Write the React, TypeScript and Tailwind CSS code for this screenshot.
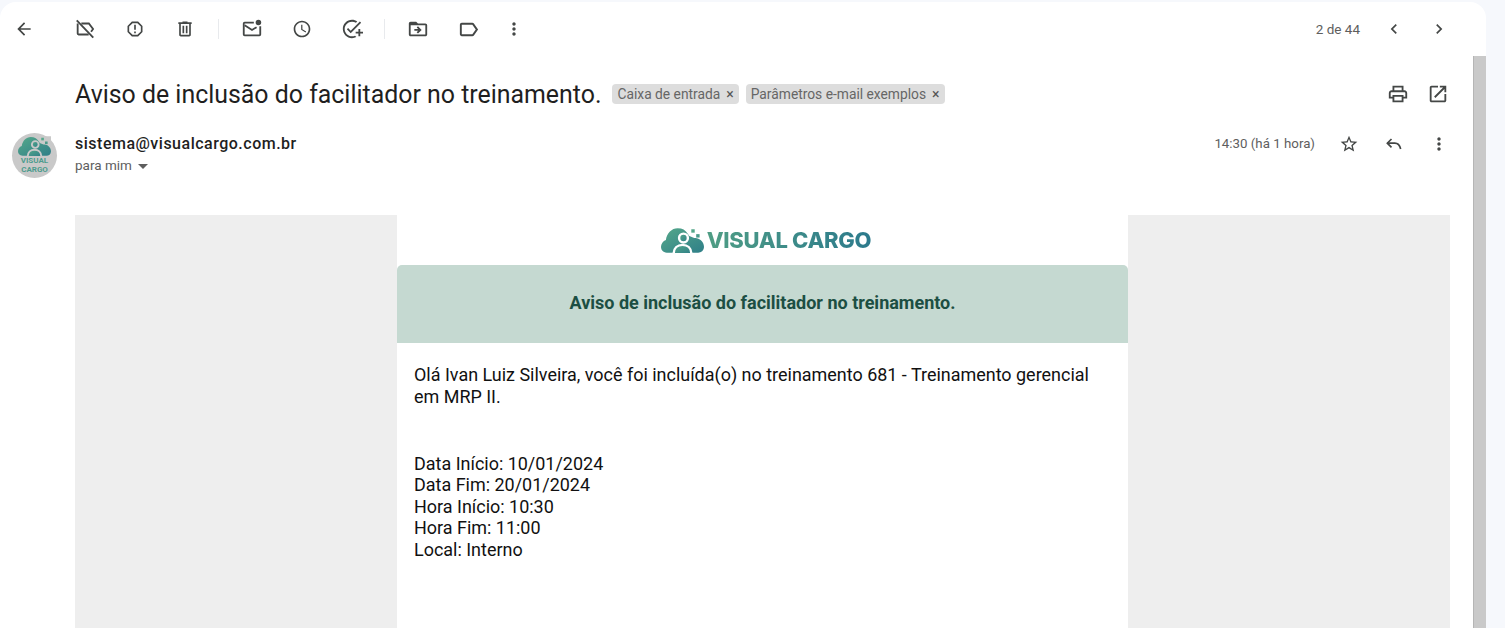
import React from 'react';

const paths = {
  back: 'M20 11H7.83l5.59-5.59L12 4l-8 8 8 8 1.41-1.41L7.83 13H20v-2z',
  report: 'M15.73 3H8.27L3 8.27v7.46L8.27 21h7.46L21 15.73V8.27L15.73 3zM19 14.9L14.9 19H9.1L5 14.9V9.1L9.1 5h5.8L19 9.1v5.8zM11 7h2v6h-2zM11 15h2v2h-2z',
  trash: 'M15 4V3H9v1H4v2h1v13c0 1.1.9 2 2 2h10c1.1 0 2-.9 2-2V6h1V4h-5zm2 15H7V6h10v13zM9 8h2v9H9zm4 0h2v9h-2z',
  clock: 'M11.99 2C6.47 2 2 6.48 2 12s4.47 10 9.99 10C17.52 22 22 17.52 22 12S17.52 2 11.99 2zM12 20c-4.42 0-8-3.58-8-8s3.58-8 8-8 8 3.58 8 8-3.58 8-8 8zm.5-13H11v6l5.25 3.15.75-1.23-4.5-2.67z',
  task: 'M22 5.18L10.59 16.6l-4.24-4.24 1.41-1.41 2.83 2.83 10-10L22 5.18zM12 20c-4.41 0-8-3.59-8-8s3.59-8 8-8c1.57 0 3.04.46 4.28 1.25l1.45-1.45C16.1 2.67 14.13 2 12 2 6.48 2 2 6.48 2 12s4.48 10 10 10c1.73 0 3.36-.44 4.78-1.22l-1.5-1.5c-1 .46-2.11.72-3.28.72zm7-5h-3v2h3v3h2v-3h3v-2h-3v-3h-2v3z',
  move: 'M20 6h-8l-2-2H4c-1.1 0-2 .9-2 2v12c0 1.1.9 2 2 2h16c1.1 0 2-.9 2-2V8c0-1.1-.9-2-2-2zm0 12H4V8h16v10zm-8.01-9l-1.41 1.41L12.16 12H8v2h4.16l-1.59 1.59L11.99 17 16 13.01 11.99 9z',
  label: 'M17.63 5.84C17.27 5.33 16.67 5 16 5L5 5.01C3.9 5.01 3 5.9 3 7v10c0 1.1.9 1.99 2 1.99L16 19c.67 0 1.27-.33 1.63-.84L22 12l-4.37-6.16zM16 17H5V7h11l3.55 5L16 17z',
  more: 'M12 8c1.1 0 2-.9 2-2s-.9-2-2-2-2 .9-2 2 .9 2 2 2zm0 2c-1.1 0-2 .9-2 2s.9 2 2 2 2-.9 2-2-.9-2-2-2zm0 6c-1.1 0-2 .9-2 2s.9 2 2 2 2-.9 2-2-.9-2-2-2z',
  prev: 'M15.41 7.41L14 6l-6 6 6 6 1.41-1.41L10.83 12z',
  next: 'M10 6L8.59 7.41 13.17 12l-4.58 4.59L10 18l6-6z',
  print: 'M19 8h-1V3H6v5H5c-1.66 0-3 1.34-3 3v6h4v4h12v-4h4v-6c0-1.66-1.34-3-3-3zM8 5h8v3H8V5zm8 14H8v-4h8v4zm4-4h-2v-2H6v2H4v-4c0-.55.45-1 1-1h14c.55 0 1 .45 1 1v4z',
  open: 'M19 19H5V5h7V3H5c-1.11 0-2 .9-2 2v14c0 1.1.89 2 2 2h14c1.1 0 2-.9 2-2v-7h-2v7zM14 3v2h3.59l-9.83 9.83 1.41 1.41L19 6.41V10h2V3h-7z',
  star: 'M22 9.24l-7.19-.62L12 2 9.19 8.63 2 9.24l5.46 4.73L5.82 21 12 17.27 18.18 21l-1.63-7.03L22 9.24zM12 15.4l-3.76 2.27 1-4.28-3.32-2.88 4.38-.38L12 6.1l1.71 4.04 4.38.38-3.32 2.88 1 4.28L12 15.4z',
};

const Icon: React.FC<{ d: string; size?: string }> = ({ d, size = 'w-5 h-5' }) => (
  <svg viewBox="0 0 24 24" className={`${size} fill-[#444746]`}>
    <path d={d} />
  </svg>
);

// 목록에 없는 아이콘은 선으로 직접 그림
const IconLabelOff = () => (
  <svg viewBox="0 0 24 24" className="w-[22px] h-[22px] fill-none stroke-[#444746] stroke-2">
    <path d="M3 2.5l18 19" />
    <path d="M8 6h8.2l4.6 6-2.2 3M16 18H5a1 1 0 0 1-1-1V6" />
  </svg>
);

const IconUnread = () => (
  <svg viewBox="0 0 24 24" className="w-[22px] h-[22px]">
    <path d="M14 5H4a1 1 0 0 0-1 1v12a1 1 0 0 0 1 1h16a1 1 0 0 0 1-1V9" fill="none" stroke="#444746" strokeWidth="2" />
    <path d="M4 8l8 5 5-3" fill="none" stroke="#444746" strokeWidth="2" />
    <circle cx="19" cy="5" r="3" fill="#444746" />
  </svg>
);

const IconReply = () => (
  <svg viewBox="0 0 24 24" className="w-5 h-5 fill-none stroke-[#444746] stroke-2">
    <path d="M9 6l-5 5 5 5" />
    <path d="M4 11h9c4 0 6 3 7 7" />
  </svg>
);

const Cloud: React.FC<{ id: string; cut: string; className: string }> = ({ id, cut, className }) => (
  <svg viewBox="0 0 44 26" className={className}>
    <defs>
      <linearGradient id={id} x1="0" y1="0" x2="1" y2="1">
        <stop offset="0" stopColor="#55a88a" />
        <stop offset="1" stopColor="#2f7f88" />
      </linearGradient>
    </defs>
    <path
      d="M6 26C2 26 0 23 0 20c0-3 2-6 5-7 1-7 6-12 12-12 5 0 8 2 10 5l2 3 5 2c4-1 10 3 10 9 0 4-3 6-6 6z"
      fill={`url(#${id})`}
    />
    <circle cx="23" cy="11" r="4.5" fill={`url(#${id})`} stroke={cut} strokeWidth="2.5" />
    <path d="M13 27c0-6 4-9 9-9s9 3 9 9" fill={`url(#${id})`} stroke={cut} strokeWidth="2.5" />
    <path d="M30 0h14v11h-6l-3-4h-5z" fill={cut} />
    <rect x="31" y="2" width="3.5" height="3.5" fill="#55a88a" />
    <rect x="36" y="7" width="3.5" height="3.5" fill="#4a9a8a" />
  </svg>
);

const Chip: React.FC<{ text: string }> = ({ text }) => (
  <div className="h-5 flex items-center gap-[6px] rounded-[4px] bg-[#dddddd] px-[5px] text-[13.8px] text-[#666666]">
    <span>{text}</span>
    <span className="text-[14px] leading-none text-[#555555]">×</span>
  </div>
);

const Divider: React.FC<{ className?: string }> = ({ className = 'mx-[8px]' }) => (
  <div className={`w-px h-5 bg-[#e8eaed] ${className}`} />
);

const Tool: React.FC<{ children: React.ReactNode; className?: string }> = ({ children, className = 'w-[50px]' }) => (
  <div className={`flex justify-center items-center ${className}`}>{children}</div>
);

const App: React.FC = () => {
  return (
    <div className="h-screen overflow-hidden bg-[#f6f8fc] pt-[2px] pr-[19px] font-['Roboto',sans-serif]">
      <div className="h-full bg-white rounded-t-2xl flex overflow-hidden">
        <div className="flex-1 min-w-0 pr-[23px]">
          {/* 상단 툴바 */}
          <div className="h-[54px] flex items-center">
            <Tool className="w-[47px] shrink-0"><Icon d={paths.back} /></Tool>
            <Tool className="w-[13px]"><span /></Tool>
            <Tool><IconLabelOff /></Tool>
            <Tool><Icon d={paths.report} /></Tool>
            <Tool><Icon d={paths.trash} /></Tool>
            <Divider />
            <Tool><IconUnread /></Tool>
            <Tool><Icon d={paths.clock} /></Tool>
            <Tool><Icon d={paths.task} size="w-[22px] h-[22px]" /></Tool>
            <Divider className="ml-[7px] mr-[8px]" />
            <Tool><Icon d={paths.move} size="w-[22px] h-[22px]" /></Tool>
            <Tool><Icon d={paths.label} size="w-[23px] h-[23px]" /></Tool>
            <Tool className="w-[42px]"><Icon d={paths.more} /></Tool>
            <div className="ml-auto flex items-center">
              <span className="text-[13.5px] text-[#5e5e5e] mr-[24px]">2 de 44</span>
              <Tool className="w-5 mr-[25px]"><Icon d={paths.prev} /></Tool>
              <Tool className="w-5"><Icon d={paths.next} /></Tool>
              <div className="w-[1px]" />
            </div>
          </div>

          {/* 제목 */}
          <div className="h-[74px] pl-[75px] flex items-start pt-[22px]">
            <h1 className="text-[24.9px] leading-[34px] font-normal text-[#1f1f1f] mr-[11px]">
              Aviso de inclusão do facilitador no treinamento.
            </h1>
            <div className="flex gap-[7px] mt-[6px]">
              <Chip text="Caixa de entrada" />
              <Chip text="Parâmetros e-mail exemplos" />
            </div>
            <div className="ml-auto flex gap-[18px] mt-[5px] mr-px">
              <Icon d={paths.print} size="w-[22px] h-[22px]" />
              <Icon d={paths.open} size="w-[22px] h-[22px]" />
            </div>
          </div>

          {/* 발신자 */}
          <div className="h-[85px] flex pl-[12px]">
            <div className="w-[45px] h-[45px] mt-[3px] rounded-full bg-[#c9c9c9] flex flex-col items-center pt-[3px] shrink-0">
              <Cloud id="cloud-avatar" cut="#c9c9c9" className="w-[33px] h-[20px]" />
              <div className="text-[8px] leading-[9px] font-bold text-center text-[#4d9c8e]">
                VISUAL
                <br />
                CARGO
              </div>
            </div>
            <div className="ml-[18px] pt-[4px]">
              <div className="text-[16px] leading-[20px] font-medium tracking-[0.5px] text-[#1f1f1f]">
                sistema@visualcargo.com.br
              </div>
              <div className="flex items-center text-[13.5px] leading-[20px] mt-[1px] text-[#5e5e5e]">
                para mim
                <span className="ml-[6px] mt-[2px] w-0 h-0 border-x-[5px] border-x-transparent border-t-[5px] border-t-[#5e5e5e]" />
              </div>
            </div>
            <div className="ml-auto flex items-center h-[30px] mt-[-1px]">
              <span className="text-[13.3px] text-[#5e5e5e] mr-[24px]">14:30 (há 1 hora)</span>
              <Tool className="w-5 mr-[25px]"><Icon d={paths.star} /></Tool>
              <Tool className="w-5 mr-[25px]"><IconReply /></Tool>
              <Tool className="w-5 mr-px"><Icon d={paths.more} /></Tool>
            </div>
          </div>

          {/* 메일 본문 */}
          <div className="ml-[75px] h-[500px] bg-[#eeeeee] flex justify-center">
            <div className="w-[731px] bg-white">
              <div className="h-[50px] flex items-center justify-center gap-[3px] pl-[7px]">
                <Cloud id="cloud-logo" cut="#ffffff" className="w-[43px] h-[26px]" />
                <span className="font-['Inter',sans-serif] text-[22px] font-extrabold tracking-[-0.3px] bg-gradient-to-r from-[#4f9d84] to-[#2c7a8c] bg-clip-text text-transparent">
                  VISUAL CARGO
                </span>
              </div>
              <div className="h-[78px] bg-[#c5d9d1] rounded-t-[5px] flex items-center justify-center pb-[3px] text-[18px] font-bold text-[#1c4f43]">
                Aviso de inclusão do facilitador no treinamento.
              </div>
              <div className="px-[17px] pt-[21px] text-[17.97px] leading-[21.5px] text-[#111111]">
                <p>Olá Ivan Luiz Silveira, você foi incluída(o) no treinamento 681 - Treinamento gerencial em MRP II.</p>
                <div className="mt-[46px] leading-[21.4px]">
                  <p>Data Início: 10/01/2024</p>
                  <p>Data Fim: 20/01/2024</p>
                  <p>Hora Início: 10:30</p>
                  <p>Hora Fim: 11:00</p>
                  <p>Local: Interno</p>
                </div>
              </div>
            </div>
          </div>
        </div>
        <div className="w-[13px] mt-[54px] bg-[#c9c9c9] border-l border-[#b5b5b5] shrink-0" />
      </div>
    </div>
  );
};

export default App;
